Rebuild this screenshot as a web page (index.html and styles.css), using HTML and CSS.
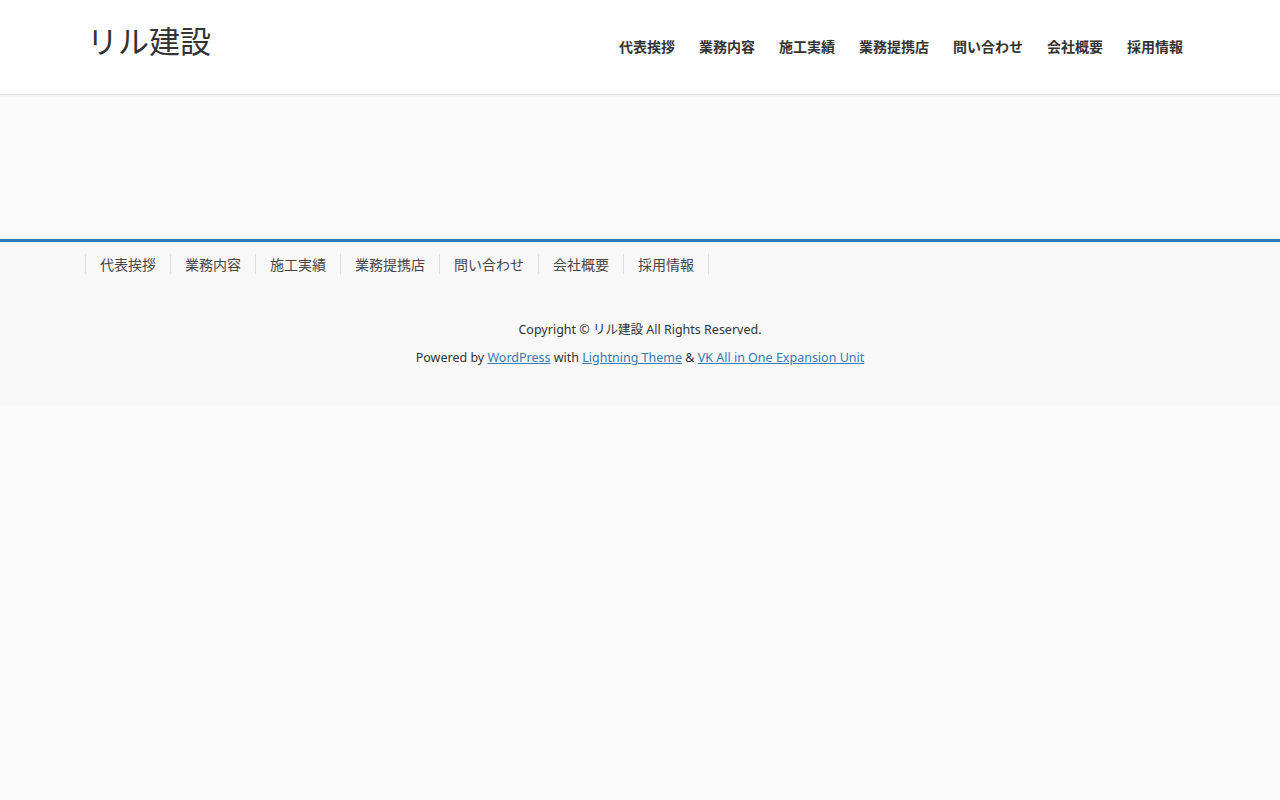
FILE: index.html
```html
<!DOCTYPE html>
<html lang="ja">
<head>
    <meta charset="UTF-8">
    <title>リル建設</title>
    <link rel="stylesheet" href="styles.css">
</head>
<body>
    <header class="site-header">
        <div class="container header-inner">
            <h1 class="logo">リル建設</h1>
            <ul class="gnav">
                <li>代表挨拶</li>
                <li>業務内容</li>
                <li>施工実績</li>
                <li>業務提携店</li>
                <li>問い合わせ</li>
                <li>会社概要</li>
                <li>採用情報</li>
            </ul>
        </div>
    </header>
    <div class="main"></div>
    <footer class="site-footer">
        <div class="container">
            <ul class="fnav">
                <li>代表挨拶</li>
                <li>業務内容</li>
                <li>施工実績</li>
                <li>業務提携店</li>
                <li>問い合わせ</li>
                <li>会社概要</li>
                <li>採用情報</li>
            </ul>
        </div>
        <div class="copy">
            <p>Copyright &copy; リル建設 All Rights Reserved.</p>
            <p>Powered by <a href="#">WordPress</a> with <a href="#">Lightning Theme</a> &amp; <a href="#">VK All in One Expansion Unit</a></p>
        </div>
    </footer>
</body>
</html>
```

FILE: styles.css
```css
* {
    margin: 0;
    padding: 0;
    box-sizing: border-box;
}

body {
    background: #fafafa;
    color: #333;
    font-family: "Noto Sans CJK JP", "Noto Sans", sans-serif;
}

ul {
    list-style: none;
}

.container {
    width: 1110px;
    margin: 0 auto;
}

.site-header {
    background: #fff;
    height: 95px;
    border-bottom: 1px solid #e5e5e5;
    box-shadow: 0 1px 2px rgba(0, 0, 0, 0.05);
}

.header-inner {
    display: flex;
    justify-content: space-between;
    align-items: center;
    height: 94px;
}

.logo {
    font-size: 31px;
    font-weight: normal;
    color: #333;
    margin-top: -16px;
    margin-left: 2px;
}

.gnav {
    display: flex;
    gap: 24px;
    margin-right: 12px;
    margin-top: -2px;
}

.gnav li {
    font-size: 14px;
    font-weight: bold;
    color: #333;
}

.main {
    height: 144px;
}

.site-footer {
    background: #f8f8f8;
    border-top: 3px solid #337ab7;
    height: 167px;
}

.fnav {
    display: flex;
    padding-top: 12px;
}

.fnav li {
    font-size: 14px;
    color: #464646;
    line-height: 20px;
    padding: 0 14px;
    border-left: 1px solid #ddd;
}

.fnav li:last-child {
    border-right: 1px solid #ddd;
}

.copy {
    text-align: center;
    font-family: "Noto Sans", "Noto Sans CJK JP", sans-serif;
    font-size: 12.5px;
    color: #333;
    padding-top: 42px;
}

.copy p {
    line-height: 28px;
}

.copy a {
    color: #337ab7;
}
```
